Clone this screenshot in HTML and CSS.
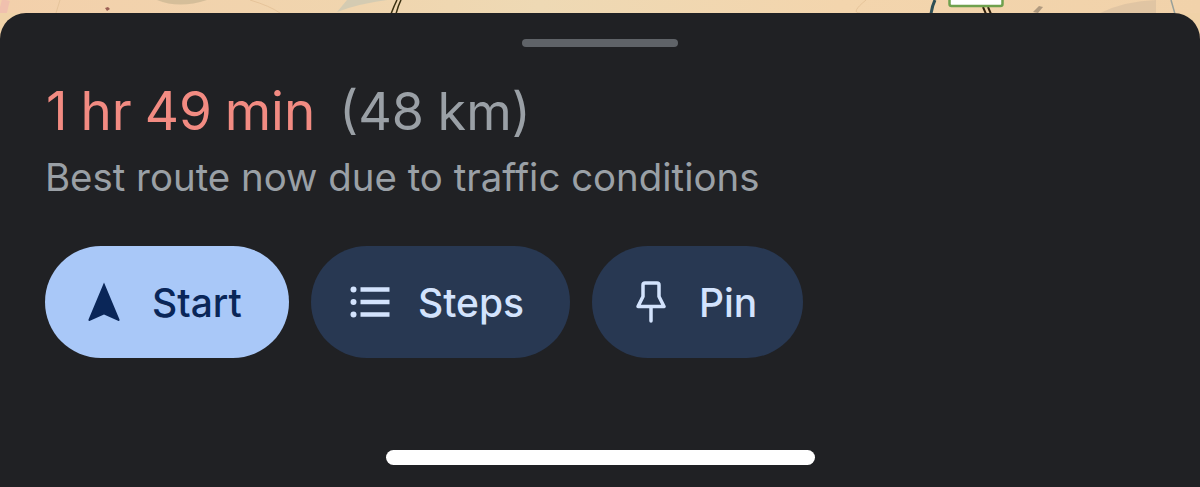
FILE: index.html
```html
<!DOCTYPE html>
<html lang="en">
<head>
    <meta charset="UTF-8">
    <meta name="viewport" content="width=device-width, initial-scale=1.0">
    <title>Route sheet</title>
    <link rel="stylesheet" href="styles.css">
</head>
<body>

<div class="map">
    <svg class="map-art" width="1200" height="40" viewBox="0 0 1200 40">
        <path d="M157 0q22 9 50 0z" fill="#c9b591" opacity="0.7"/>
        <path d="M337 12q20-8 50-12h-40z" fill="#c2c4b4" opacity="0.6"/>
        <path d="M1100 13q25-12 56-13v13z" fill="#d6bd9f" opacity="0.6"/>
        <path d="M0 30q2-16 6-30" fill="none" stroke="#f0c0ae" stroke-width="8"/>
        <path d="M105 8l3-1 2 2-3 2z" fill="#9b5f55"/>
        <path d="M60 0l-4 13M250 0q20 6 30 13M860 13q-10 0 6-13" fill="none" stroke="#e6c49a" stroke-width="1"/>
        <path d="M391 14q3-8 6-14M396 14q2-8 5-14" fill="none" stroke="#3a3010" stroke-width="1.500"/>
        <path d="M931 14q1-8 4-14" fill="none" stroke="#2f4f55" stroke-width="3"/>
        <path d="M983 7l3 7M988 7l3 7" fill="none" stroke="#30200c" stroke-width="2"/>
        <path d="M1033 12l6-6 4 1-5 6z" fill="#a08c74" opacity="0.8"/>
        <path d="M1171 0l4 14" fill="none" stroke="#98a09a" stroke-width="1.500"/>
        <rect x="949.500" y="-6" width="53" height="12" rx="2" fill="#fff" stroke="#6fa14e" stroke-width="2.500"/>
    </svg>
</div>

<div class="sheet">
    <div class="handle"></div>

    <div class="summary">
        <div class="title"><span class="duration">1 hr 49 min</span><span class="distance">(48 km)</span></div>
        <div class="subtitle">Best route now due to traffic conditions</div>
    </div>

    <div class="actions">
        <button type="button" class="btn btn-start">
            <svg class="icon" width="34" height="42" viewBox="0 0 34 42">
                <path d="M17 1.500L32.500 38.500Q33 40.500 31 39.800L17 33.500L3 39.800Q1 40.500 1.500 38.500Z" fill="#0a2658"/>
            </svg>
            <span>Start</span>
        </button>
        <button type="button" class="btn btn-steps">
            <svg class="icon" width="40" height="32" viewBox="0 0 40 32" fill="#d3e3fd">
                <circle cx="3.500" cy="3.500" r="3"/>
                <circle cx="3.500" cy="16" r="3"/>
                <circle cx="3.500" cy="28.500" r="3"/>
                <rect x="10.500" y="1.250" width="29" height="4.500"/>
                <rect x="10.500" y="13.750" width="29" height="4.500"/>
                <rect x="10.500" y="26.250" width="29" height="4.500"/>
            </svg>
            <span>Steps</span>
        </button>
        <button type="button" class="btn btn-pin">
            <svg class="icon" width="30" height="42" viewBox="0 0 30 42" fill="none" stroke="#d3e3fd" stroke-width="3.500" stroke-linejoin="round" stroke-linecap="round">
                <path d="M9 2H21Q23 2 23 4V15.500L28 25.500H2L7 15.500V4Q7 2 9 2Z"/>
                <path d="M15 26V40"/>
            </svg>
            <span>Pin</span>
        </button>
    </div>

    <div class="home-bar"></div>
</div>

</body>
</html>
```

FILE: styles.css
```css
html, body {
    margin: 0;
    padding: 0;
    height: 487px;
    overflow: hidden;
}

body {
    font-family: Inter, Roboto, "Liberation Sans", sans-serif;
    background-color: #f0d2a8;
    display: flex;
    flex-direction: column;
}

.map {
    height: 13px;
    overflow: hidden;
    flex: none;
    background: linear-gradient(90deg, #f3d0ab 0%, #f0d5ae 30%, #eed9b4 45%, #f3d5ad 70%, #f1d2aa 100%);
}

.map-art {
    display: block;
}

.sheet {
    flex: 1;
    background-color: #202124;
    border-radius: 26px 26px 0 0;
    padding: 26px 45px 0;
    display: flex;
    flex-direction: column;
    box-sizing: border-box;
}

.handle {
    align-self: center;
    width: 156px;
    height: 8px;
    border-radius: 4px;
    background-color: #5f6368;
    flex: none;
}

.summary {
    margin-top: 34px;
}

.title {
    font-size: 53px;
    line-height: 60px;
    height: 60px;
    display: flex;
    align-items: baseline;
    gap: 24px;
    padding-left: 1px;
}

.duration {
    color: #f28b82;
    word-spacing: -2px;
}

.distance {
    color: #9aa0a6;
    font-size: 52px;
    word-spacing: -1px;
}

.subtitle {
    margin-top: 14px;
    font-size: 38.400px;
    line-height: 44px;
    color: #9aa0a6;
}

.actions {
    display: flex;
    gap: 22px;
    margin-top: 47px;
}

.btn {
    height: 112px;
    border: none;
    border-radius: 56px;
    display: flex;
    align-items: center;
    font-family: inherit;
    font-size: 39px;
    font-weight: 500;
    padding: 0;
    box-sizing: border-box;
}

.icon {
    display: block;
    flex: none;
}

.btn-start {
    width: 244px;
    padding-left: 42px;
    gap: 31px;
    background-color: #a9c8f8;
    color: #0a2658;
}

.btn-steps {
    width: 259px;
    padding-left: 39px;
    gap: 28px;
    background-color: #283852;
    color: #d3e3fd;
}

.btn-pin {
    width: 211px;
    padding-left: 44px;
    gap: 33px;
    background-color: #283852;
    color: #d3e3fd;
}

.home-bar {
    align-self: center;
    width: 429px;
    height: 15px;
    border-radius: 8px;
    background-color: #fff;
    margin-top: 92px;
    flex: none;
}
```
